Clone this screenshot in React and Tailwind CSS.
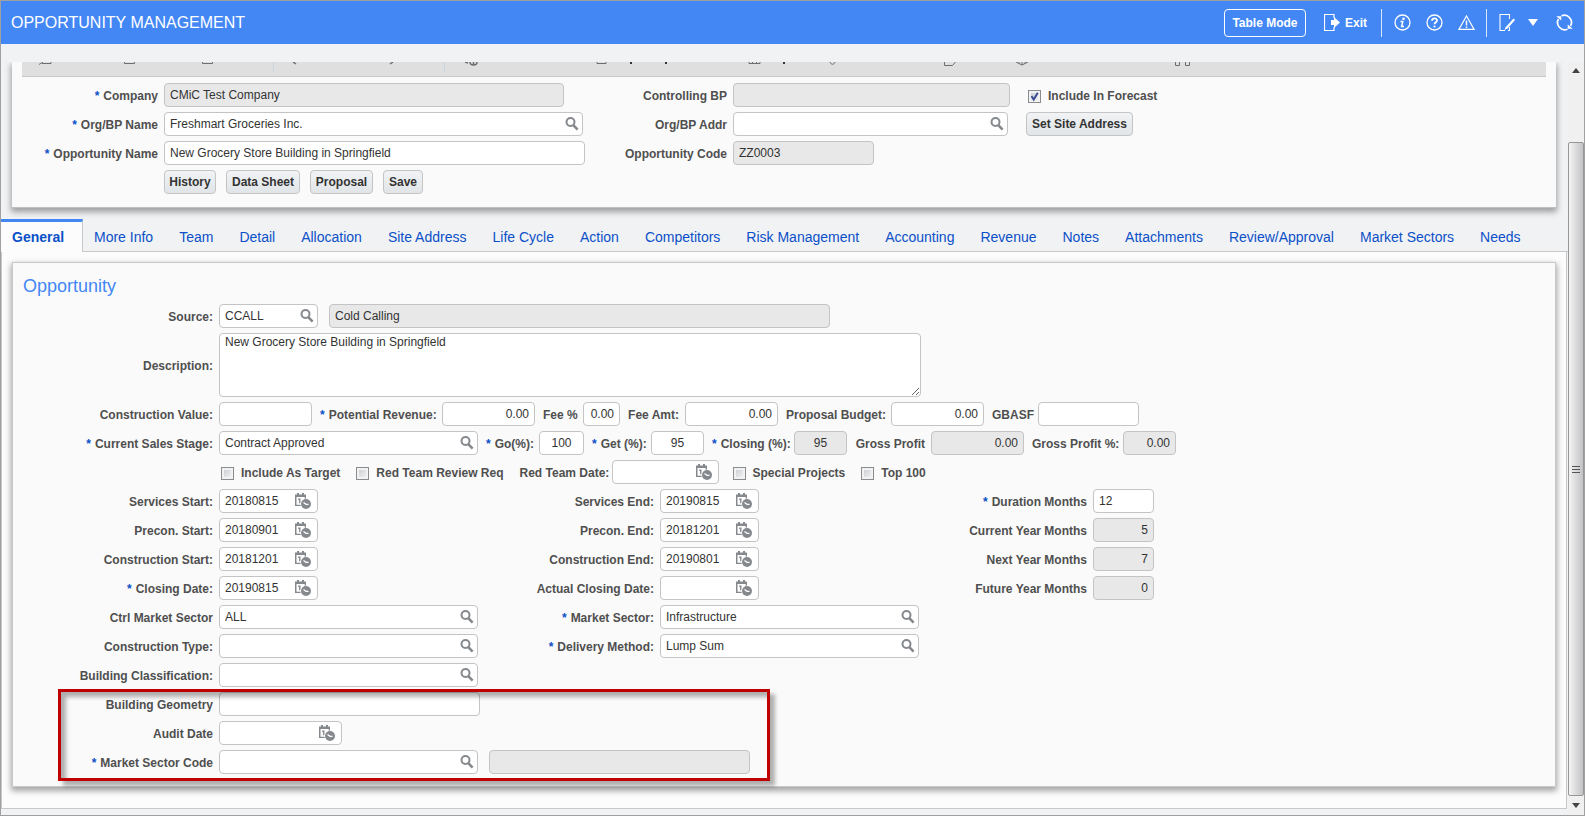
const Magnifier = () => (
  <svg viewBox="0 0 14 14" className="h-[14px] w-[14px]" fill="none" stroke="#85898d">
    <circle cx="5.5" cy="5" r="4" strokeWidth="2" />
    <path d="M8.3 8.1 L12.6 12.6" strokeWidth="2.6" />
  </svg>
)

const CalendarClock = () => (
  <svg viewBox="0 0 16 16" className="h-4 w-4" fill="none">
    <path d="M0 1.500h11v2.500H0zM0 3h1.500v10H0zM0 11.800h6V13H0zM9.700 3H11v3H9.700z" fill="#85898d" />
    <path d="M2 0h2v2H2zM7 0h2v2H7z" fill="#85898d" />
    <path d="M3.200 6.300h1.600V10.300" stroke="#85898d" strokeWidth="1.400" />
    <circle cx="11" cy="11" r="5.600" fill="#fff" />
    <circle cx="11" cy="11" r="5" fill="#85898d" />
    <path d="M8.500 9.500l2.500 1.800h2.500" stroke="#fff" strokeWidth="1.200" />
  </svg>
)

const slug = (text) => text.toLowerCase().replace(/[^a-z0-9]+/g, '-')

function Label({ text, required, className = '' }) {
  return (
    <label htmlFor={slug(text)} className={`shrink-0 whitespace-nowrap pt-px text-right font-bold text-[#4f4f4f] ${className}`}>
      {required && <span className="mr-1 text-[#0b50c8]">*</span>}
      {text}
    </label>
  )
}

function Box({ id, label, value = '', icon, readOnly, align = 'text-left', className = '' }) {
  return (
    <div className={`flex h-6 shrink-0 items-center rounded-[4px] border border-[#c4c4c4] ${readOnly ? 'bg-[#e8e8e8]' : 'bg-white'} ${className}`}>
      <input
        id={id}
        aria-label={label}
        defaultValue={value}
        readOnly={readOnly}
        className={`h-full w-full min-w-0 bg-transparent px-[5px] pb-px text-[#333] outline-none ${align}`}
      />
      {icon === 'search' && (
        <button aria-label="Search" className="mr-[3px] shrink-0"><Magnifier /></button>
      )}
      {icon === 'date' && (
        <button aria-label="Pick date" className="mr-[6px] shrink-0"><CalendarClock /></button>
      )}
    </div>
  )
}

function Field({ text, required, labelClass, ...box }) {
  return (
    <div className="flex shrink-0 items-center gap-[6px]">
      <Label text={text} required={required} className={labelClass} />
      <Box id={slug(text)} {...box} />
    </div>
  )
}

function Check({ text, checked }) {
  return (
    <label className="flex shrink-0 items-center gap-[7px] whitespace-nowrap font-bold text-[#4f4f4f]">
      <span className="relative mt-[2px] grid h-[13px] w-[13px]">
        <input
          type="checkbox"
          defaultChecked={checked}
          className="peer h-[13px] w-[13px] appearance-none border border-[#8a8d90] bg-linear-to-br from-[#c5c9cf] to-[#f8f8f8] shadow-[inset_0_0_0_2px_#f2f2f2]"
        />
        <svg viewBox="0 0 13 13" className="pointer-events-none absolute inset-0 hidden peer-checked:block" fill="none" stroke="#3c4f94" strokeWidth="2">
          <path d="M3.500 6l2.200 3.500L9.800 2.800" />
        </svg>
      </span>
      <span className="pt-[2px]">{text}</span>
    </label>
  )
}

function Button({ children, className }) {
  return (
    <button className={`h-6 shrink-0 whitespace-nowrap rounded-[4px] border border-[#c4c4c4] bg-linear-to-b from-[#f1f3f5] to-[#e1e5e8] pb-px font-bold text-[#333] ${className}`}>
      {children}
    </button>
  )
}

function Header() {
  return (
    <header className="flex h-[43px] shrink-0 items-center justify-between bg-[#4387f5] pr-[11px] pl-[10px] text-white">
      <h1 className="pt-px text-base">OPPORTUNITY MANAGEMENT</h1>
      <div className="flex items-center">
        <button className="h-7 w-[82px] rounded-[4px] border border-white font-bold whitespace-nowrap">Table Mode</button>
        <button className="ml-[18px] flex items-center gap-[5px] font-bold">
          <svg viewBox="0 0 16 17" className="h-[17px] w-4" fill="none" stroke="#fff">
            <path d="M10 4V.5H.5v16H10V13" strokeWidth="1.200" />
            <path d="M7 6h3V3l6 5.500-6 5.500v-3H7z" fill="#fff" stroke="none" />
          </svg>
          Exit
        </button>
        <span className="ml-[14px] h-7 w-px bg-white/80" />
        <button aria-label="Information" className="ml-3">
          <svg viewBox="0 0 17 17" className="h-[17px] w-[17px]" fill="none" stroke="#fff">
            <circle cx="8.500" cy="8.500" r="7.500" strokeWidth="1.300" />
            <circle cx="9.500" cy="4.700" r="1.300" fill="#fff" stroke="none" />
            <path d="M6.500 7.500h2.300L7.600 12.500h2.400" strokeWidth="1.500" />
          </svg>
        </button>
        <button aria-label="Help" className="ml-[15px]">
          <svg viewBox="0 0 17 17" className="h-[17px] w-[17px]" fill="none" stroke="#fff">
            <circle cx="8.500" cy="8.500" r="7.500" strokeWidth="1.300" />
            <path d="M6 6.800C6 3.600 11 3.600 11 6.500 11 8.300 8.500 8.300 8.500 10.300" strokeWidth="1.800" />
            <circle cx="8.500" cy="12.500" r="1.100" fill="#fff" stroke="none" />
          </svg>
        </button>
        <button aria-label="Warnings" className="ml-[15px]">
          <svg viewBox="0 0 17 17" className="h-[17px] w-[17px]" fill="none" stroke="#fff">
            <path d="M8.500 2L16 15.300H1z" strokeWidth="1.200" />
            <path d="M8.500 6.500v5M8.500 12.500v1.500" strokeWidth="1.500" />
          </svg>
        </button>
        <span className="ml-[11px] h-7 w-px bg-white/80" />
        <button aria-label="Edit layout" className="ml-3">
          <svg viewBox="0 0 16 17" className="h-[17px] w-4" fill="none" stroke="#fff">
            <path d="M10.500 5V.5H1v16h5M10.500 13v3.500H9" strokeWidth="1.100" />
            <path d="M15.300 5.200L8 13.500" strokeWidth="2.200" />
            <path d="M7 12.300L5.500 16l3.700-1.700z" fill="#fff" stroke="none" />
          </svg>
        </button>
        <button aria-label="More" className="ml-[13px]">
          <svg viewBox="0 0 10 7" className="h-[7px] w-[10px]" fill="#fff"><path d="M0 0h10L5 7z" /></svg>
        </button>
        <button aria-label="Refresh" className="ml-[18px]">
          <svg viewBox="0 0 17 17" className="h-[17px] w-[17px]" fill="none" stroke="#fff" strokeWidth="1.700">
            <path d="M5.500 1.800A7.200 7.200 0 0 1 14.500 12M11.500 15.200A7.200 7.200 0 0 1 2.500 5" />
            <path d="M.3 2.200h5v4.300zM16.700 14.800h-5v-4.300z" fill="#fff" stroke="none" />
          </svg>
        </button>
      </div>
    </header>
  )
}

function Toolbar() {
  return (
    <div className="mx-[10px] h-[15px] overflow-hidden border-b border-[#c8c8c8] bg-[#dfdfdf]">
      <svg className="h-[14px] w-[1240px]" fill="none" stroke="#6e6e6e">
        <path d="M17 2.500l4-2.500M20 1.500h9v-1.500M102.500 0v1.500h10v-1.500M180.500 0v1.500h10v-1.500" />
        <path d="M271 0l3 2M368 2l3-2M443 0l3 1" strokeWidth="1.500" />
        <path d="M448 0c0 4 7 4 7 0M451.500 0v3" strokeWidth="1.500" />
        <path d="M575 0v1.500h9v-1.500M727 0v1.500h11v-1.500M730.500 0v1M734.500 0v1M808 0c1 3 4 3 5 0" />
        <path d="M922.500 0v3.500h8l3-3.500M994 0l6 3 6-3M1000 0v3M997 0v1.500M1003 0v1.500" />
        <path d="M1153.500 0v3.500h4v-3.500M1163.500 0v3.500h4v-3.500" />
        <path d="M609 0v2M644 0v2M762 0v2" stroke="#333" strokeWidth="2" />
        <path d="M251.500 0v10M422.500 0v10" stroke="#cbd5dd" />
      </svg>
    </div>
  )
}

const tabs = [
  'More Info', 'Team', 'Detail', 'Allocation', 'Site Address', 'Life Cycle', 'Action', 'Competitors',
  'Risk Management', 'Accounting', 'Revenue', 'Notes', 'Attachments', 'Review/Approval', 'Market Sectors', 'Needs',
]

const dates = [
  { start: ['Services Start:', '20180815'], end: ['Services End:', '20190815'], months: ['Duration Months', '12'] },
  { start: ['Precon. Start:', '20180901'], end: ['Precon. End:', '20181201'], months: ['Current Year Months', '5'] },
  { start: ['Construction Start:', '20181201'], end: ['Construction End:', '20190801'], months: ['Next Year Months', '7'] },
  { start: ['Closing Date:', '20190815'], end: ['Actual Closing Date:', ''], months: ['Future Year Months', '0'] },
]

function Summary() {
  return (
    <section className="mr-3 ml-[11px] border-b border-[#c0c0c0] bg-[#fafafa] pb-[13px] shadow-[0_3px_6px_1px_rgba(0,0,0,0.35)]">
      <Toolbar />
      <div className="mt-[6px] flex">
        <div className="flex w-[574px] shrink-0 flex-col gap-[5px]">
          <Field text="Company" required labelClass="w-[146px]" value="CMiC Test Company" readOnly className="w-[400px]" />
          <Field text="Org/BP Name" required labelClass="w-[146px]" value="Freshmart Groceries Inc." icon="search" className="w-[419px]" />
          <Field text="Opportunity Name" required labelClass="w-[146px]" value="New Grocery Store Building in Springfield" className="w-[421px]" />
          <div className="ml-[152px] flex gap-[10px]">
            <Button className="w-[52px]">History</Button>
            <Button className="w-[74px]">Data Sheet</Button>
            <Button className="w-[63px]">Proposal</Button>
            <Button className="w-10">Save</Button>
          </div>
        </div>
        <div className="flex w-[440px] shrink-0 flex-col gap-[5px]">
          <Field text="Controlling BP" labelClass="w-[141px]" readOnly className="w-[277px]" />
          <Field text="Org/BP Addr" labelClass="w-[141px]" icon="search" className="w-[275px]" />
          <Field text="Opportunity Code" labelClass="w-[141px]" value="ZZ0003" readOnly className="w-[141px]" />
        </div>
        <div className="flex flex-col gap-[5px]">
          <div className="flex h-6 items-center pl-[2px]"><Check text="Include In Forecast" checked /></div>
          <Button className="w-[107px]">Set Site Address</Button>
        </div>
      </div>
    </section>
  )
}

function Opportunity() {
  return (
    <section className="mx-[10px] mt-[10px] border border-[#c8c8c8] bg-[#fafafa] pb-3 shadow-[0_3px_6px_1px_rgba(0,0,0,0.35)]">
      <h2 className="mt-[11px] ml-[10px] text-lg leading-6 text-[#4387f5]">Opportunity</h2>
      <div className="mt-[6px] flex flex-col gap-[5px]">
        <div className="flex gap-[11px]">
          <Field text="Source:" labelClass="w-[200px]" value="CCALL" icon="search" className="w-[99px]" />
          <Box label="Source description" value="Cold Calling" readOnly className="w-[501px]" />
        </div>
        <div className="flex items-center gap-[6px]">
          <Label text="Description:" className="w-[200px]" />
          <textarea
            id="description-"
            defaultValue="New Grocery Store Building in Springfield"
            className="h-16 w-[702px] rounded-[4px] border border-[#c4c4c4] bg-white px-[5px] text-[#333] outline-none"
          />
        </div>
        <div className="flex gap-2">
          <Field text="Construction Value:" labelClass="w-[200px]" className="w-[93px]" />
          <Field text="Potential Revenue:" required labelClass="w-[116px]" value="0.00" align="text-right" className="w-[93px]" />
          <Field text="Fee %" labelClass="w-[34px]" value="0.00" align="text-right" className="w-[37px]" />
          <Field text="Fee Amt:" labelClass="w-[51px]" value="0.00" align="text-right" className="w-[93px]" />
          <Field text="Proposal Budget:" labelClass="w-[99px]" value="0.00" align="text-right" className="w-[93px]" />
          <Field text="GBASF" labelClass="w-10" className="w-[101px]" />
        </div>
        <div className="flex gap-2">
          <Field text="Current Sales Stage:" required labelClass="w-[200px]" value="Contract Approved" icon="search" className="w-[259px]" />
          <Field text="Go(%):" required labelClass="w-[47px]" value="100" align="text-center" className="w-[45px]" />
          <Field text="Get (%):" required labelClass="w-[53px]" value="95" align="text-center" className="w-[53px]" />
          <Field text="Closing (%):" required labelClass="w-[76px]" value="95" align="text-center" readOnly className="w-[53px]" />
          <Field text="Gross Profit" labelClass="w-[70px]" value="0.00" align="text-right" readOnly className="w-[93px]" />
          <Field text="Gross Profit %:" labelClass="w-[85px]" value="0.00" align="text-right" readOnly className="w-[53px]" />
        </div>
        <div className="ml-[208px] flex gap-4">
          <Check text="Include As Target" />
          <Check text="Red Team Review Req" />
          <div className="flex gap-[14px]">
            <Field text="Red Team Date:" labelClass="w-[86px]" icon="date" className="w-[107px]" />
            <Check text="Special Projects" />
          </div>
          <Check text="Top 100" />
        </div>
        {dates.map(({ start, end, months }, i) => (
          <div key={start[0]} className="flex">
            <Field text={start[0]} required={i === 3} labelClass="w-[200px]" value={start[1]} icon="date" className="w-[99px]" />
            <Field text={end[0]} labelClass="w-[336px]" value={end[1]} icon="date" className="w-[99px]" />
            <Field
              text={months[0]}
              required={i === 0}
              labelClass="w-[328px]"
              value={months[1]}
              readOnly={i > 0}
              align={i > 0 ? 'text-right' : 'text-left'}
              className="w-[61px]"
            />
          </div>
        ))}
        <div className="flex">
          <Field text="Ctrl Market Sector" labelClass="w-[200px]" value="ALL" icon="search" className="w-[259px]" />
          <Field text="Market Sector:" required labelClass="w-[176px]" value="Infrastructure" icon="search" className="w-[259px]" />
        </div>
        <div className="flex">
          <Field text="Construction Type:" labelClass="w-[200px]" icon="search" className="w-[259px]" />
          <Field text="Delivery Method:" required labelClass="w-[176px]" value="Lump Sum" icon="search" className="w-[259px]" />
        </div>
        <Field text="Building Classification:" labelClass="w-[200px]" icon="search" className="w-[259px]" />
        <div className="relative flex flex-col gap-[5px]">
          <Field text="Building Geometry" labelClass="w-[200px]" className="w-[261px]" />
          <Field text="Audit Date" labelClass="w-[200px]" icon="date" className="w-[123px]" />
          <div className="flex gap-[11px]">
            <Field text="Market Sector Code" required labelClass="w-[200px]" icon="search" className="w-[259px]" />
            <Box label="Market sector name" readOnly className="w-[261px]" />
          </div>
          <div className="pointer-events-none absolute -top-[3px] -bottom-[7px] left-[45px] w-[712px] border-[3px] border-[#c00000] shadow-[5px_5px_4px_rgba(0,0,0,0.3),inset_5px_5px_4px_rgba(0,0,0,0.3)]" />
        </div>
      </div>
    </section>
  )
}

function Scrollbar() {
  return (
    <div className="flex w-4 shrink-0 flex-col items-center bg-[#f0f0f0]">
      <svg viewBox="0 0 8 5" className="mt-[6px] mb-[69px] h-[5px] w-2 shrink-0"><path d="M0 5l4-5 4 5z" fill="#444" /></svg>
      <div className="flex w-full grow items-center justify-center rounded-[2px] border border-[#979797] bg-linear-to-r from-[#f4f4f4] to-[#c2c2c6]">
        <svg viewBox="0 0 8 8" className="h-2 w-2" stroke="#555"><path d="M0 1.500h8M0 4.500h8M0 7.500h8" /></svg>
      </div>
      <svg viewBox="0 0 8 5" className="my-[7px] h-[5px] w-2 shrink-0"><path d="M0 0l4 5 4-5z" fill="#444" /></svg>
    </div>
  )
}

export default function App() {
  return (
    <div className="flex min-h-screen flex-col border border-[#a0a0a0] bg-[#f1f2f4] font-['Liberation_Sans',Arial,sans-serif] text-[12px] leading-4">
      <Header />
      <div className="mt-[18px] flex grow overflow-hidden">
        <main className="flex min-w-0 grow flex-col pb-[6px]">
          <Summary />
          <nav className="mt-[11px] flex h-[33px] border-b border-[#c8c8c8] text-[14px] whitespace-nowrap">
            <a href="#general" className="-mb-px h-[33px] w-[82px] shrink-0 border-t-[3px] border-r border-t-[#4387f5] border-r-[#c8c8c8] bg-[#fcfcfc] pt-[7px] pl-[11px] font-bold text-[#0b50c8]">General</a>
            {tabs.map((tab) => (
              <a key={tab} href={`#${slug(tab)}`} className="pt-[10px] pr-[15px] pl-[11px] text-[#0b50c8]">{tab}</a>
            ))}
          </nav>
          <div className="mr-px grow border-x border-b border-[#c8c8c8] bg-[#fcfcfc] pb-[19px]">
            <Opportunity />
          </div>
        </main>
        <Scrollbar />
      </div>
    </div>
  )
}
